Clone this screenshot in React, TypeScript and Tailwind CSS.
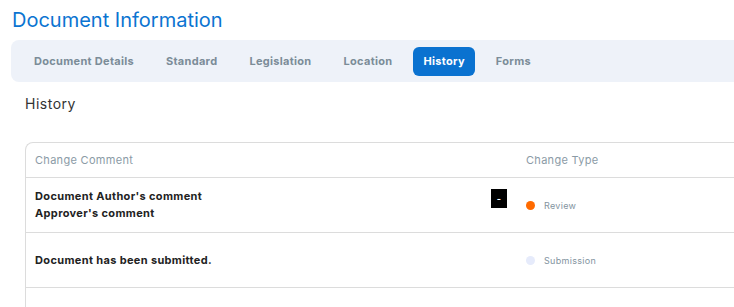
import React from "react";

const tabs = ["Document Details", "Standard", "Legislation", "Location", "History", "Forms"];

const rows = [
  {
    lines: ["Document Author's comment", "Approver's comment"],
    type: "Review",
    dot: "bg-[#ff6a00]",
    toggle: true,
  },
  {
    lines: ["Document has been submitted."],
    type: "Submission",
    dot: "bg-[#e6ebfb]",
    toggle: false,
  },
];

export default function App() {
  return (
    <div className="h-[307px] w-[734px] overflow-hidden bg-white font-['Inter',sans-serif]">
      <h1 className="pl-[12px] pt-[7px] text-[20px] leading-[26px] text-[#0b74d1]">
        Document Information
      </h1>

      <nav className="ml-[11px] mt-[7px] flex h-[42px] w-[740px] items-center gap-[10px] rounded-l-lg bg-[#eef2f9] pl-[12px]">
        {tabs.map((t) => (
          <button
            key={t}
            className={
              t === "History"
                ? "h-[29px] rounded-md bg-[#0a72d0] px-[10px] text-[11px] font-bold tracking-[0.3px] text-white"
                : "h-[29px] px-[11px] text-[11px] font-bold tracking-[0.3px] text-[#7b8c98]"
            }
          >
            {t}
          </button>
        ))}
      </nav>

      <h2 className="pl-[25px] pt-[13px] text-[14px] leading-[18px] tracking-[0.5px] text-[#333]">
        History
      </h2>

      <div className="ml-[25px] mt-[29px] w-[720px] rounded-tl-lg border-l border-t border-[#dcdcdc]">
        <div className="flex h-[35px] items-center border-b border-[#dcdcdc] text-[11px] tracking-[0.3px] text-[#8b9ba6]">
          <div className="w-[491px] px-[9px]">Change Comment</div>
          <div className="px-[9px]">Change Type</div>
        </div>
        {rows.map((r, i) => (
          <div key={i} className="flex h-[55px] items-center border-b border-[#dcdcdc]">
            <div className="flex w-[491px] items-start justify-between pl-[9px] pr-[10px] text-[11px] font-bold leading-[17px] tracking-[0.35px] text-[#222]">
              <div>
                {r.lines.map((l) => (
                  <div key={l}>{l}</div>
                ))}
              </div>
              {r.toggle && (
                <span className="mt-[1px] flex h-[19px] w-[16px] items-center justify-center bg-black text-[9px] font-bold text-white">
                  -
                </span>
              )}
            </div>
            <div className="flex items-center gap-[9px] px-[9px] pt-[1px]">
              <span className={`h-[9px] w-[9px] rounded-full ${r.dot}`} />
              <span className="text-[9px] tracking-[0.3px] text-[#8394a0]">{r.type}</span>
            </div>
          </div>
        ))}
        <div className="h-[30px]" />
      </div>
    </div>
  );
}
